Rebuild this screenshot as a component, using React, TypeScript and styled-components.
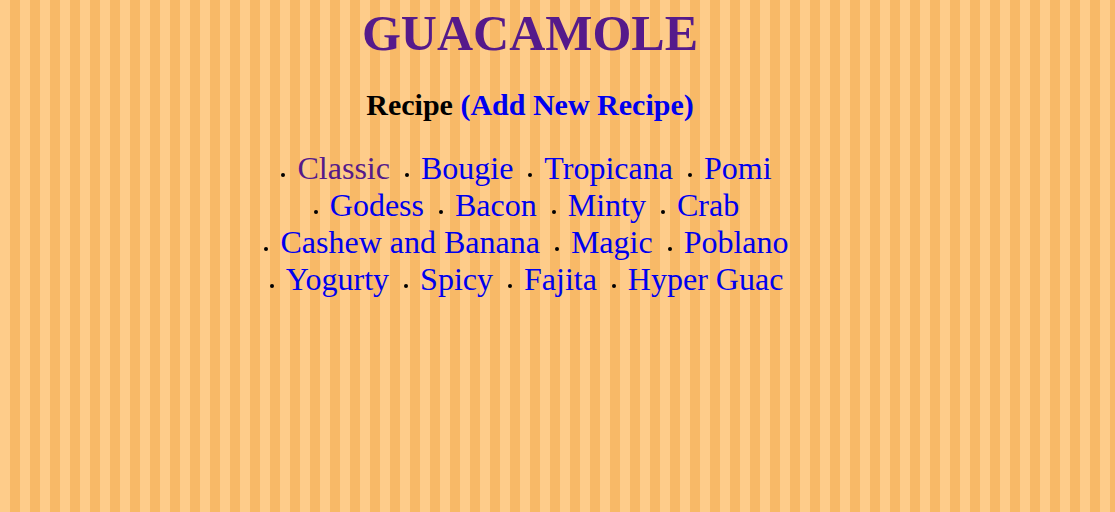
import React from "react";
import styled, { createGlobalStyle } from "styled-components";

const GlobalStyle = createGlobalStyle`
  html, body {
    margin: 0;
    padding: 0;
  }
  body {
    min-height: 512px;
    font-family: "Liberation Serif", "Times New Roman", serif;
    background: repeating-linear-gradient(
      90deg,
      #fecc8a 0px,
      #fecc8a 10px,
      #f8b967 10px,
      #f8b967 20px
    );
  }
`;

const Page = styled.main`
  width: 1060px;
  text-align: center;
  padding-top: 5px;
`;

const Title = styled.h1`
  margin: 0;
  font-size: 50px;
  font-weight: bold;
  line-height: 57px;
  a {
    color: #551a8b;
    text-decoration: none;
  }
`;

const Heading = styled.h3`
  margin: 26px 0 28px;
  font-size: 30px;
  font-weight: bold;
  line-height: 34px;
  color: #000;
`;

const HeadLink = styled.a`
  color: #0000ee;
  text-decoration: none;
`;

const List = styled.ul`
  list-style: none;
  margin: 0 auto;
  padding: 0;
  width: 560px;
  font-size: 32px;
  line-height: 37px;
`;

const Item = styled.li`
  display: inline-block;
  white-space: nowrap;
  margin-right: 7px;
`;

const Dot = styled.span`
  display: inline-block;
  width: 4px;
  height: 4px;
  border-radius: 50%;
  background: #000;
  margin-right: 12px;
  vertical-align: 2px;
`;

const RecipeLink = styled.a<{ $visited?: boolean }>`
  color: ${(p) => (p.$visited ? "#551a8b" : "#0000ee")};
  text-decoration: none;
`;

const recipes: { name: string; visited?: boolean }[] = [
  { name: "Classic", visited: true },
  { name: "Bougie" },
  { name: "Tropicana" },
  { name: "Pomi" },
  { name: "Godess" },
  { name: "Bacon" },
  { name: "Minty" },
  { name: "Crab" },
  { name: "Cashew and Banana" },
  { name: "Magic" },
  { name: "Poblano" },
  { name: "Yogurty" },
  { name: "Spicy" },
  { name: "Fajita" },
  { name: "Hyper Guac" },
];

export default function App() {
  return (
    <>
      <GlobalStyle />
      <Page>
        <Title>
          <a href="#">GUACAMOLE</a>
        </Title>
        <Heading>
          Recipe <HeadLink href="#">(Add New Recipe)</HeadLink>
        </Heading>
        <List>
          {recipes.map((r) => (
            <React.Fragment key={r.name}>
              <Item>
                <Dot />
                <RecipeLink href="#" $visited={r.visited}>
                  {r.name}
                </RecipeLink>
              </Item>{" "}
            </React.Fragment>
          ))}
        </List>
      </Page>
    </>
  );
}
